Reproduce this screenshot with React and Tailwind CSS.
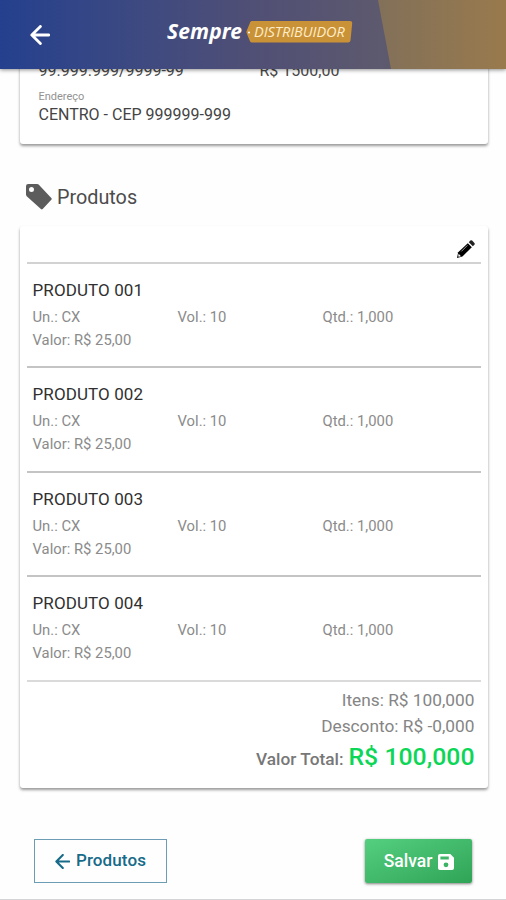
const produtos = [
  { nome: 'PRODUTO 001', un: 'CX', vol: '10', qtd: '1,000', valor: '25,00' },
  { nome: 'PRODUTO 002', un: 'CX', vol: '10', qtd: '1,000', valor: '25,00' },
  { nome: 'PRODUTO 003', un: 'CX', vol: '10', qtd: '1,000', valor: '25,00' },
  { nome: 'PRODUTO 004', un: 'CX', vol: '10', qtd: '1,000', valor: '25,00' },
]

function ArrowLeft({ className }) {
  return (
    <svg viewBox="0 0 20 20" className={className} fill="none" stroke="currentColor" strokeWidth="2.8" strokeLinecap="round" strokeLinejoin="round">
      <path d="M10.400 1.400L1.800 10l8.600 8.600M2 10h16.800" />
    </svg>
  )
}

function Tag({ className }) {
  return (
    <svg viewBox="0 0 26 26" className={className} fill="currentColor" fillRule="evenodd">
      <path d="M2.200 0h9q.8 0 1.400.6L25.300 14q.9.9 0 1.800L16.700 25q-.9.9-1.800 0L.7 12.200Q0 11.500 0 10.600V2.200Q0 0 2.200 0zM5.500 3a2.500 2.500 0 1 0 0 5 2.500 2.500 0 0 0 0-5z" />
    </svg>
  )
}

function Pencil({ className }) {
  return (
    <svg viewBox="0 0 18 18" className={className}>
      <path d="M0 18l1.200-5.800L10.800 3.200l4 4-9.400 9.300z" fill="#000" />
      <path d="M11.800 2.200l1.500-1.600q.9-.8 1.800 0l2.300 2.300q.8.900 0 1.800l-1.600 1.500z" fill="#222" />
      <path d="M1.600 13.800l2.400 2.400-2.200.6-.6-.6z" fill="#fff" />
      <path d="M4.400 11.400l6-6" stroke="#aaa" strokeWidth=".9" />
    </svg>
  )
}

function Save({ className }) {
  return (
    <svg viewBox="0 0 16 16" className={className} fill="currentColor" fillRule="evenodd">
      <path d="M2 0h10.300L16 3.700V14q0 2-2 2H2q-2 0-2-2V2Q0 0 2 0zM2.400 2.400v3h8.400v-3zM8 8.400a2.400 2.400 0 1 0 0 4.800 2.400 2.400 0 0 0 0-4.800z" />
    </svg>
  )
}

function Header() {
  return (
    <header className="relative z-10 h-[69px] shrink-0 bg-linear-to-r from-[#24408e] via-[#504f75] to-[#6a6266] shadow-[0_1px_4px_rgba(0,0,0,0.45)]">
      {/* Gold slanted panel */}
      <svg viewBox="0 0 130 69" className="absolute right-0 top-0 h-[69px] w-[130px]">
        <defs>
          <linearGradient id="gold" x1="0" x2="1">
            <stop offset="0" stopColor="#827059" />
            <stop offset="1" stopColor="#997a4d" />
          </linearGradient>
        </defs>
        <path d="M2 0H130V69H15z" fill="url(#gold)" />
      </svg>
      <div className="relative flex h-full items-start">
        <ArrowLeft className="ml-[30px] mt-[25px] h-5 w-5 text-white" />
        <div className="ml-[117px] mt-[20px] flex items-center">
          <span className="w-[78px] whitespace-nowrap pb-[1px] font-['Noto_Sans'] text-[21px] font-bold italic leading-[22px] tracking-[0.1px] text-white">Sempre</span>
          <div className="relative ml-[1px] h-[23px] w-[107px]">
            <svg viewBox="0 0 107 23" className="absolute inset-0 h-full w-full">
              <path d="M6 1H104q2.500 0 2.200 2.200L104.500 20.500q-.3 2-2.500 2H6q-1.500 0-2-1.200L.6 13q-.4-1 0-2L4.300 2q.5-1 1.700-1z" fill="#c99236" />
              <circle cx="3" cy="12.500" r="1" fill="#fff" />
            </svg>
            <span className="relative ml-[8px] block whitespace-nowrap font-['Open_Sans'] text-[14.500px] font-normal italic leading-[24px] tracking-[-0.050px] text-[#ffecc8]">DISTRIBUIDOR</span>
          </div>
        </div>
      </div>
    </header>
  )
}

function Produto({ produto }) {
  return (
    <div className="h-[104.400px] border-b-2 border-[#c4c4c4] px-[6px] pt-[14px] text-[14.800px] text-[#8b8b8b] last:border-[#dadada]">
      <h3 className="text-[17px] leading-[24px] tracking-[0.1px] text-[#303030]">{produto.nome}</h3>
      <div className="mt-[3px] grid grid-cols-[145px_145px_1fr] leading-[24px]">
        <span>Un.: {produto.un}</span>
        <span>Vol.: {produto.vol}</span>
        <span>Qtd.: {produto.qtd}</span>
      </div>
      <div className="leading-[23px]">Valor: R$ {produto.valor}</div>
    </div>
  )
}

function App() {
  return (
    <div className="flex h-[900px] w-[506px] flex-col overflow-hidden border-b border-[#d4d4d8] bg-[#fefefe] font-[Roboto]">
      <Header />

      {/* Cliente */}
      <section className="ml-[20px] mr-[18.500px] mt-[-20px] h-[95px] shrink-0 rounded-[3px] bg-white px-[18.500px] pt-[10px] shadow-[0_2px_3px_rgba(0,0,0,0.4)]">
        <div className="grid grid-cols-[221px_1fr] text-[16px] leading-[24px] text-[#4a4a4a]">
          <span>99.999.999/9999-99</span>
          <span>R$ 1500,00</span>
        </div>
        <p className="mt-[7px] text-[11px] leading-[14px] text-[#929292]">Endereço</p>
        <p className="text-[16px] leading-[22px] text-[#444]">CENTRO - CEP 999999-999</p>
      </section>

      <h2 className="ml-[26px] mt-[38px] flex h-[30px] shrink-0 items-center text-[19.800px] text-[#4c4c4c]">
        <Tag className="mr-[5px] h-[26px] w-[26px] text-[#5c5c5c]" />
        <span className="pt-[2px]">Produtos</span>
      </h2>

      <section className="ml-[20px] mr-[18.500px] mt-[14px] h-[562px] shrink-0 rounded-[3px] bg-white px-[6.500px] shadow-[0_2px_3px_rgba(0,0,0,0.4)]">
        <div className="flex h-[38px] justify-end border-b-2 border-[#d2d2d2] pr-[6px] pt-[14px]">
          <Pencil className="h-[18px] w-[18px]" />
        </div>
        <div>
          {produtos.map((produto) => (
            <Produto key={produto.nome} produto={produto} />
          ))}
        </div>
        <div className="pr-[6.500px] pt-[5px] text-right text-[17.300px] leading-[26px] text-[#858585]">
          <p>Itens: R$ 100,000</p>
          <p>Desconto: R$ -0,000</p>
          <p className="flex items-baseline justify-end gap-[5px] font-medium leading-[36px] text-[#777]">
            Valor Total:
            <span className="text-[24.800px] text-[#0cd657]">R$ 100,000</span>
          </p>
        </div>
      </section>

      {/* Acoes */}
      <div className="mt-[51px] flex shrink-0 justify-between pl-[34px] pr-[34px] text-[17px] font-medium">
        <button className="flex h-[44px] w-[133px] items-center justify-center gap-[6px] border border-[#6d9db4] tracking-[0.1px] text-[#176b89]">
          <ArrowLeft className="h-[15px] w-[15px]" />
          Produtos
        </button>
        <button className="flex h-[44px] w-[107px] items-center justify-center gap-[6px] rounded-[2px] bg-linear-to-br from-[#54cf80] to-[#2fa457] pl-[1px] text-[17.500px] text-white shadow-[0_1px_3px_rgba(0,0,0,0.5)]">
          Salvar
          <Save className="mt-[2px] h-4 w-4" />
        </button>
      </div>
    </div>
  )
}

export default App
